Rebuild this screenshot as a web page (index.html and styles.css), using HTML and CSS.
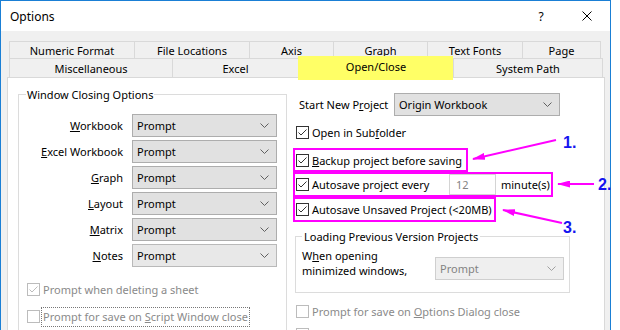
FILE: index.html
```html
<!DOCTYPE html>
<html lang="en">
<head>
<meta charset="UTF-8">
<title>Options</title>
<link rel="stylesheet" href="styles.css">
</head>
<body>
<div class="window">
    <div class="titlebar">
        <span class="title">Options</span>
        <span class="title-btn">?</span>
        <span class="title-btn">
            <svg width="10" height="10" viewBox="0 0 10 10"><path d="M0.5 0.5 L9.5 9.5 M9.5 0.5 L0.5 9.5" stroke="#000" stroke-width="1"/></svg>
        </span>
    </div>

    <div class="client">
        <div class="tabs">
            <div class="tab-row row-back">
                <div class="tab t-numeric">Numeric Format</div>
                <div class="tab t-files">File Locations</div>
                <div class="tab t-axis">Axis</div>
                <div class="tab t-graph">Graph</div>
                <div class="tab t-fonts">Text Fonts</div>
                <div class="tab t-page">Page</div>
            </div>
            <div class="tab-row row-front">
                <div class="tab t-misc">Miscellaneous</div>
                <div class="tab t-excel">Excel</div>
                <div class="tab t-open selected">Open/Close</div>
                <div class="tab t-path">System Path</div>
            </div>
        </div>

        <div class="panel">
            <fieldset class="group closing">
                <legend>Window Closing Options</legend>
                <div class="closing-grid">
                    <span class="field-label"><u>W</u>orkbook</span>
                    <div class="combo"><span>Prompt</span><svg class="chev" width="9" height="5" viewBox="0 0 9 5"><polyline points="0.5,0.5 4.5,4.5 8.5,0.5"/></svg></div>
                    <span class="field-label"><u>E</u>xcel Workbook</span>
                    <div class="combo"><span>Prompt</span><svg class="chev" width="9" height="5" viewBox="0 0 9 5"><polyline points="0.5,0.5 4.5,4.5 8.5,0.5"/></svg></div>
                    <span class="field-label"><u>G</u>raph</span>
                    <div class="combo"><span>Prompt</span><svg class="chev" width="9" height="5" viewBox="0 0 9 5"><polyline points="0.5,0.5 4.5,4.5 8.5,0.5"/></svg></div>
                    <span class="field-label"><u>L</u>ayout</span>
                    <div class="combo"><span>Prompt</span><svg class="chev" width="9" height="5" viewBox="0 0 9 5"><polyline points="0.5,0.5 4.5,4.5 8.5,0.5"/></svg></div>
                    <span class="field-label"><u>M</u>atrix</span>
                    <div class="combo"><span>Prompt</span><svg class="chev" width="9" height="5" viewBox="0 0 9 5"><polyline points="0.5,0.5 4.5,4.5 8.5,0.5"/></svg></div>
                    <span class="field-label"><u>N</u>otes</span>
                    <div class="combo light"><span>Prompt</span><svg class="chev" width="9" height="5" viewBox="0 0 9 5"><polyline points="0.5,0.5 4.5,4.5 8.5,0.5"/></svg></div>
                </div>

                <div class="check disabled delete-sheet">
                    <span class="cb"><svg viewBox="0 0 11 11"><path d="M1.5 5.5 L4 8 L9.5 2.5"/></svg></span>
                    <span>Prompt when deleting a sheet</span>
                </div>
                <div class="check disabled script-close">
                    <span class="cb"></span>
                    <span class="focus">Prompt for save on <u>S</u>cript Window close</span>
                </div>
            </fieldset>

            <div class="right-col">
                <div class="start-row">
                    <span class="start-label">Start New P<u>r</u>oject</span>
                    <div class="combo start-combo"><span>Origin Workbook</span><svg class="chev" width="9" height="5" viewBox="0 0 9 5"><polyline points="0.5,0.5 4.5,4.5 8.5,0.5"/></svg></div>
                </div>

                <div class="check subfolder">
                    <span class="cb"><svg viewBox="0 0 11 11"><path d="M1.5 5.5 L4 8 L9.5 2.5"/></svg></span>
                    <span>Open in Sub<u>f</u>older</span>
                </div>

                <div class="mark backup">
                    <div class="check">
                        <span class="cb"><svg viewBox="0 0 11 11"><path d="M1.5 5.5 L4 8 L9.5 2.5"/></svg></span>
                        <span><u>B</u>ackup project before saving</span>
                    </div>
                </div>
                <div class="mark autosave">
                    <div class="check">
                        <span class="cb"><svg viewBox="0 0 11 11"><path d="M1.5 5.5 L4 8 L9.5 2.5"/></svg></span>
                        <span class="autosave-text">Autosave project every</span>
                    </div>
                    <div class="spin">12</div>
                    <span class="unit">minute(s)</span>
                </div>
                <div class="mark unsaved">
                    <div class="check">
                        <span class="cb"><svg viewBox="0 0 11 11"><path d="M1.5 5.5 L4 8 L9.5 2.5"/></svg></span>
                        <span>Autosave Unsaved Project (&lt;20MB)</span>
                    </div>
                </div>

                <fieldset class="group loading">
                    <legend>Loading Previous Version Projects</legend>
                    <div class="loading-row">
                        <span class="loading-label">W<u>h</u>en opening<br>minimized windows,</span>
                        <div class="combo off loading-combo"><span>Prompt</span><svg class="chev" width="9" height="5" viewBox="0 0 9 5"><polyline points="0.5,0.5 4.5,4.5 8.5,0.5"/></svg></div>
                    </div>
                </fieldset>

                <div class="check disabled dialog-close">
                    <span class="cb"></span>
                    <span>Prompt for save on <u>O</u>ptions Dialog close</span>
                </div>
                <div class="check disabled last-check">
                    <span class="cb"></span>
                </div>
            </div>
        </div>
    </div>
</div>

<svg class="annot" width="620" height="330" viewBox="0 0 620 330">
    <defs>
        <marker id="head" markerUnits="userSpaceOnUse" markerWidth="13" markerHeight="7" refX="12" refY="3.5" orient="auto">
            <path d="M0 0 L13 3.5 L0 7 Z" fill="#ff00ff"/>
        </marker>
    </defs>
    <line x1="556" y1="140" x2="473" y2="159" stroke="#ff00ff" stroke-width="2" marker-end="url(#head)"/>
    <line x1="594" y1="184" x2="558" y2="184" stroke="#ff00ff" stroke-width="2" marker-end="url(#head)"/>
    <line x1="562" y1="223" x2="503" y2="210" stroke="#ff00ff" stroke-width="2" marker-end="url(#head)"/>
    <text x="563" y="148" class="num">1.</text>
    <text x="598" y="190" class="num">2.</text>
    <text x="563" y="233" class="num">3.</text>
</svg>
</body>
</html>
```

FILE: styles.css
```css
* {
    box-sizing: border-box;
}

body {
    margin: 0;
    background-color: #fff;
    font-family: "Noto Sans", "Open Sans", sans-serif;
    font-size: 11px;
    line-height: 15px;
    color: #000;
    overflow: hidden;
}

.window {
    width: 611px;
    height: 330px;
    border: 1px solid #1a7fd5;
    border-bottom: none;
    background-color: #f0f0f0;
    overflow: hidden;
}

.titlebar {
    height: 30px;
    background-color: #fff;
    display: flex;
    align-items: center;
}

.title {
    flex: 1;
    padding-left: 9px;
    font-size: 12px;
}

.title-btn {
    width: 46px;
    height: 30px;
    display: flex;
    align-items: center;
    justify-content: center;
    font-size: 12px;
}

.title-btn svg {
    display: block;
}

.client {
    padding: 10px 5px 0 6px;
}

/* tabs */

.tabs {
    margin-left: 2px;
}

.tab-row {
    display: flex;
}

.tab {
    display: flex;
    align-items: center;
    justify-content: center;
    border: 1px solid #d9d9d9;
    border-right: none;
    border-bottom: none;
    background-color: #f0f0f0;
}

.tab:last-child {
    border-right: 1px solid #d9d9d9;
}

.row-back .tab {
    height: 17px;
}

.row-front .tab {
    height: 19px;
}

.t-numeric { width: 125px; }
.t-files { width: 115px; }
.t-axis { width: 84px; }
.t-graph { width: 94px; }
.t-fonts { width: 95px; }
.t-page { width: 79px; }
.t-misc { width: 163px; }
.t-excel { width: 126px; }
.t-open { width: 155px; }
.t-path { width: 150px; }

.tab.selected {
    position: relative;
    z-index: 1;
    height: 24px;
    margin: -2px 0 -3px;
    padding-bottom: 4px;
    background-color: #ffff66;
    border-color: #ffff66;
}

/* panel */

.panel {
    display: flex;
    align-items: flex-start;
    height: 260px;
    padding: 9px 0 0 10px;
    background-color: #fff;
    border: 1px solid #d9d9d9;
}

.group {
    margin: 0;
    border: 1px solid #dcdcdc;
    min-width: 0;
}

.group legend {
    padding: 0 1px;
}

.closing {
    width: 269px;
    height: 300px;
    padding: 0 8px 0 7px;
}

.closing-grid {
    display: grid;
    grid-template-columns: 97px 145px;
    grid-auto-rows: 23px;
    column-gap: 9px;
    row-gap: 3px;
    margin-top: 12px;
}

.field-label {
    align-self: center;
    justify-self: end;
}

.combo {
    display: flex;
    align-items: center;
    justify-content: space-between;
    height: 23px;
    padding: 0 7px 0 4px;
    background-color: #e1e1e1;
    border: 1px solid #adadad;
}

.combo.light {
    background-color: #e8e8e8;
    border-color: #b9b9b9;
}

.combo.off {
    background-color: #efefef;
    border-color: #cfcfcf;
    color: #838383;
}

.chev {
    display: block;
}

.chev polyline {
    fill: none;
    stroke: #606060;
    stroke-width: 1;
}

.combo.off .chev polyline {
    stroke: #a0a0a0;
}

/* check boxes */

.check {
    display: flex;
    align-items: center;
    gap: 3px;
    height: 15px;
}

.cb {
    width: 13px;
    height: 13px;
    border: 1px solid #333;
    background-color: #fff;
}

.cb svg {
    display: block;
    width: 11px;
    height: 11px;
}

.cb path {
    fill: none;
    stroke: #333;
    stroke-width: 1;
}

.check.disabled {
    color: #8a8a8a;
}

.check.disabled .cb {
    border-color: #bcbcbc;
}

.check.disabled .cb path {
    stroke: #bcbcbc;
}

.delete-sheet {
    margin-top: 15px;
    padding-left: 1px;
}

.script-close {
    margin-top: 12px;
    padding-left: 1px;
    gap: 2px;
}

.focus {
    outline: 1px dotted #777;
    padding: 1px 1px 2px;
}

/* right column */

.right-col {
    margin-left: 6px;
    width: 300px;
}

.start-row {
    display: flex;
    align-items: center;
    margin-top: 6px;
    padding-left: 6px;
}

.start-label {
    width: 95px;
}

.start-combo {
    width: 166px;
}

.subfolder {
    margin-top: 9px;
    padding-left: 3px;
}

.mark {
    display: flex;
    align-items: center;
    width: fit-content;
    height: 24px;
    padding: 0 4px 0 1px;
    border: 2px solid #ff00ff;
}

.backup {
    margin-top: 8px;
}

.autosave,
.unsaved {
    height: 25px;
}

.autosave {
    padding-right: 1px;
}

.unsaved {
    padding-right: 2px;
}

.autosave-text {
    width: 137px;
}

.spin {
    width: 47px;
    height: 21px;
    padding: 2px 6px;
    color: #838383;
    background-color: #fff;
    border: 1px solid #d4d4d4;
}

.unit {
    margin-left: 5px;
}

.loading {
    width: 275px;
    margin: 7px 0 0 2px;
    padding: 4px 5px 12px 6px;
}

.loading legend {
    padding: 0 2px;
}

.loading-row {
    display: flex;
    align-items: flex-start;
}

.loading-label {
    width: 133px;
}

.loading-combo {
    width: 129px;
    margin-top: 9px;
}

.dialog-close {
    margin-top: 11px;
    padding-left: 3px;
}

.last-check {
    margin-top: 8px;
    padding-left: 3px;
}

/* annotations */

.annot {
    position: absolute;
    top: 0;
    left: 0;
    pointer-events: none;
}

.num {
    font-family: "Liberation Sans", Arial, sans-serif;
    font-weight: bold;
    font-size: 16px;
    fill: #1414f0;
}
```
